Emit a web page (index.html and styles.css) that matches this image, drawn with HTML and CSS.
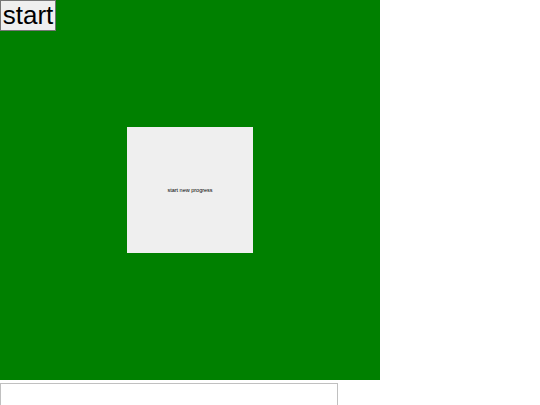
FILE: index.html
```html
<!DOCTYPE html>
<html>
<head>
<meta charset="utf-8">
<link rel="stylesheet" href="styles.css">
</head>
<body>
<div class="stage">
  <button class="start">start</button>
  <div class="panel"><span class="label">start new progress</span></div>
</div>
<div class="log"></div>
</body>
</html>
```
FILE: styles.css
```css
html, body {
  margin: 0;
  padding: 0;
  background: #fff;
  font-family: "Liberation Sans", Arial, sans-serif;
}
.stage {
  position: relative;
  width: 380px;
  height: 380px;
  background: #008000;
  display: flex;
  align-items: center;
  justify-content: center;
}
.start {
  position: absolute;
  top: 0;
  left: 0;
  width: 56px;
  height: 31px;
  margin: 0;
  padding: 0;
  font-family: "Liberation Sans", Arial, sans-serif;
  font-size: 26px;
  line-height: 29px;
  color: #000;
  background: #efefef;
  border: 1px solid #767676;
  border-radius: 0;
}
.panel {
  width: 126px;
  height: 126px;
  background: #efefef;
  display: flex;
  align-items: center;
  justify-content: center;
}
.label {
  font-size: 5.5px;
  color: #000;
}
.log {
  margin-top: 3px;
  margin-left: 0;
  width: 336px;
  height: 40px;
  border: 1px solid #c0c0c0;
  border-bottom: none;
}
```
